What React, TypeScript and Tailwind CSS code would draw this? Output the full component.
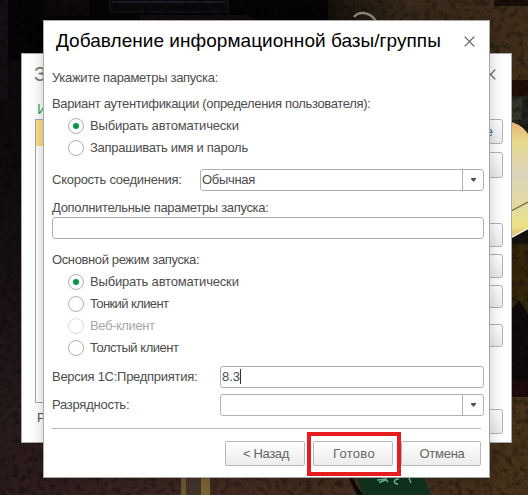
import clsx from "clsx";
import type { ReactNode } from "react";

interface Option {
  label: string;
  spacing: string;
  checked?: boolean;
  disabled?: boolean;
}

const AUTH_OPTIONS: Option[] = [
  { label: "Выбирать автоматически", spacing: "tracking-[-0.18px]", checked: true },
  { label: "Запрашивать имя и пароль", spacing: "tracking-[-0.29px]" },
];

const MODE_OPTIONS: Option[] = [
  { label: "Выбирать автоматически", spacing: "tracking-[-0.18px]", checked: true },
  { label: "Тонкий клиент", spacing: "tracking-[-0.6px]" },
  { label: "Веб-клиент", spacing: "tracking-[-0.4px]", disabled: true },
  { label: "Толстый клиент", spacing: "tracking-[-0.48px]" },
];

function Wallpaper() {
  return (
    <svg className="absolute inset-0" width="528" height="495" viewBox="0 0 528 495">
      <defs>
        <linearGradient id="left" x1="0" y1="0" x2="0" y2="1">
          <stop offset="0" stopColor="#0b070a" />
          <stop offset="0.35" stopColor="#100b0e" />
          <stop offset="0.7" stopColor="#1e1517" />
          <stop offset="1" stopColor="#32221f" />
        </linearGradient>
        <linearGradient id="wood" x1="0" y1="0" x2="1" y2="0">
          <stop offset="0" stopColor="#18110a" />
          <stop offset="0.4" stopColor="#382a1c" />
          <stop offset="1" stopColor="#402e1a" />
        </linearGradient>
        <linearGradient id="floor" x1="0" y1="0" x2="1" y2="0">
          <stop offset="0" stopColor="#2a1b1b" />
          <stop offset="0.4" stopColor="#402b22" />
          <stop offset="1" stopColor="#46311a" />
        </linearGradient>
        <linearGradient id="lamp" x1="0" y1="0" x2="0" y2="1">
          <stop offset="0" stopColor="#e8b070" />
          <stop offset="0.17" stopColor="#e6d98a" />
          <stop offset="0.45" stopColor="#dcd3bc" />
          <stop offset="0.75" stopColor="#e2dc9c" />
          <stop offset="0.9" stopColor="#ece284" />
          <stop offset="1" stopColor="#e0b070" />
        </linearGradient>
        <filter id="grain" x="0" y="0" width="100%" height="100%">
          <feTurbulence type="fractalNoise" baseFrequency="0.16" numOctaves="3" seed="4" />
          <feColorMatrix values="0 0 0 0 0  0 0 0 0 0  0 0 0 0 0  3 0 0 0 -1.35" />
        </filter>
      </defs>
      <rect width="528" height="495" fill="url(#left)" />
      <rect x="8" width="320" height="60" fill="#060406" />
      <rect width="8" height="100" fill="#150d14" />
      <rect x="44" width="46" height="16" fill="#0d090b" />
      <path d="M110 0v12h118V0" fill="#0b090d" stroke="#211a1a" />
      <path d="M112 2h114" stroke="#1c1c24" strokeWidth="2" />
      <path d="M140 15h108l8 5H140z" fill="#120e0e" />
      <rect x="328" width="200" height="82" fill="url(#wood)" />
      <rect x="494" width="34" height="6" fill="#1c0e0a" />
      <rect x="511" y="80" width="17" height="16" fill="#1f0f08" />
      <rect x="511" y="96" width="17" height="40" fill="#22201a" />
      <rect x="512" y="98" width="10" height="22" fill="#35342a" />
      <rect x="511" y="235" width="17" height="155" fill="#33260a" />
      <path d="M511 310l8-10 9 14v76h-17z" fill="#0e0a09" />
      <rect x="511" y="380" width="17" height="17" fill="#1c0b0a" />
      <rect x="511" y="397" width="17" height="98" fill="#46311a" />
      <rect x="0" y="443" width="528" height="52" fill="url(#floor)" />
      <rect width="528" height="495" filter="url(#grain)" opacity="0.35" />
      <path d="M354 17c4-6 15-6 22 4" fill="none" stroke="#8d8b76" strokeWidth="2.5" />
      <path d="M511 228l17-6v22h-17z" fill="#17110b" />
      <path d="M511 122c8 2 13 6 17 12v95l-17 9z" fill="url(#lamp)" />
      <path d="M511 211l17-9" stroke="#6b6a3f" strokeWidth="1.2" />
      <path d="M511 237.500l17-9" stroke="#f3eedb" strokeWidth="1.5" />
      <rect x="181" y="478" width="5" height="17" fill="#6b5730" />
      <rect x="186" y="478" width="15" height="17" fill="#40332a" />
      <rect x="201" y="478" width="9" height="17" fill="#7a6231" />
      <path d="M354 470h67l10 25h-68z" fill="#10321d" />
      <path d="M352 478l11 17h-6l-8-17z" fill="#0c0907" />
      <path d="M377 480l9-1M379 482.500l8-3M388 482l-3-4M399 479c-6 0-6 5-1 5M409 478l2 5" fill="none" stroke="#6bb99a" strokeWidth="1.5" />
    </svg>
  );
}

function CloseIcon() {
  return (
    <svg className="shrink-0" width="11" height="11" viewBox="0 0 11 11" stroke="#5a5a5a" strokeWidth="1.2">
      <path d="M0.7 0.7l9.6 9.6M10.3 0.7L0.7 10.3" />
    </svg>
  );
}

function Radio({ label, spacing, checked, disabled }: Option) {
  return (
    <label className={clsx("flex h-[22px] items-center gap-1.5 pl-4", disabled ? "text-[#a9a9a9]" : "text-[#4d4d4d]", spacing)}>
      <span
        className={clsx(
          "flex size-4 shrink-0 items-center justify-center rounded-full border",
          disabled ? "border-[#dcdcdc]" : "border-[#b0b0b0]"
        )}
      >
        {checked && <span className="size-[6px] rounded-full bg-[#009646]" />}
      </span>
      {label}
    </label>
  );
}

function Field({ value, dropdown, caret, className }: { value?: string; dropdown?: boolean; caret?: boolean; className?: string }) {
  return (
    <div className={clsx("flex h-[22px] rounded-[3px] border border-[#b0b0b0] bg-white", className)}>
      <div className="flex flex-1 items-center pb-px pl-px">
        {value}
        {caret && <span className="h-[15px] w-px bg-[#333]" />}
      </div>
      {dropdown && (
        <div className="flex w-[21px] items-center justify-center border-l border-[#b0b0b0]">
          <svg width="5" height="4" viewBox="0 0 5 4">
            <path d="M0 0h5v1L2.5 4 0 1z" fill="#505050" />
          </svg>
        </div>
      )}
    </div>
  );
}

function Button({ className, children }: { className?: string; children: ReactNode }) {
  return (
    <button
      className={clsx(
        "h-[25px] w-20 rounded-[2px] border border-[#b8b8b8] bg-linear-to-b from-white to-[#ececec] text-[#666]",
        className
      )}
    >
      {children}
    </button>
  );
}

function SideButton({ className, children }: { className: string; children?: ReactNode }) {
  return (
    <div className={clsx("w-20 rounded-[3px] border border-[#b3b3b3] bg-linear-to-b from-white to-[#ececec]", className)}>
      {children}
    </div>
  );
}

function LauncherWindow() {
  return (
    <div className="absolute top-[53px] left-[21px] flex h-[390px] w-[491px] flex-col border border-[#a9a9a9] bg-white text-[#555]">
      <div className="flex h-10 items-center justify-between pr-[15px] pl-3 text-xl text-[#777]">
        <span>З</span>
        <CloseIcon />
      </div>
      <div className="flex flex-1 justify-between pr-2 pl-[13px]">
        <div className="w-[350px]">
          <div className="flex h-[25px] items-center pl-0.5 pt-1 text-[15px] text-[#2fae66]">И</div>
          <div className="h-[284px] border border-[#a9a9a9]">
            <div className="h-[26px] bg-[#fbe08a]" />
          </div>
          <div className="flex h-[26px] items-center pl-0.5 pt-1">Р</div>
        </div>
        <div className="flex flex-col pt-[25px]">
          <SideButton className="flex h-[25px] items-center justify-end pr-[9px] text-[#4a5a80]">е</SideButton>
          <SideButton className="mt-2 h-[26px]" />
          <SideButton className="mt-[45px] h-6" />
          <SideButton className="mt-[7px] h-6" />
          <SideButton className="mt-[7px] h-[23px]" />
          <SideButton className="mt-4 h-[23px]" />
          <SideButton className="mt-[62px] h-[25px]" />
        </div>
      </div>
    </div>
  );
}

export default function App() {
  return (
    <div className="relative h-[495px] w-[528px] overflow-hidden bg-[#0b070a] font-['Liberation_Sans',Arial,sans-serif] text-[13px] leading-4 whitespace-nowrap">
      <Wallpaper />
      <LauncherWindow />

      <div className="absolute top-5 left-[43px] flex h-[458px] w-[447px] flex-col border border-[#a9a9a9] bg-white text-[#4d4d4d] shadow-[0_0_14px_rgba(0,0,0,0.22)]">
        <div className="flex h-10 items-center justify-between pr-[14px] pl-3">
          <h1 className="text-[19px] tracking-[0.04px] text-black">Добавление информационной базы/группы</h1>
          <CloseIcon />
        </div>

        <div className="flex flex-1 flex-col pr-[5px] pl-2">
          <p className="mt-[9px] h-4 tracking-[-0.31px]">Укажите параметры запуска:</p>

          <p className="mt-2.5 h-4 tracking-[-0.34px]">Вариант аутентификации (определения пользователя):</p>
          <div className="mt-[3px]">
            {AUTH_OPTIONS.map(o => <Radio key={o.label} {...o} />)}
          </div>

          <div className="mt-2.5 flex items-center">
            <span className="w-[148px] tracking-[-0.26px]">Скорость соединения:</span>
            <Field className="flex-1 tracking-[-0.3px]" value="Обычная" dropdown />
          </div>

          <p className="mt-[9px] h-4 tracking-[-0.32px]">Дополнительные параметры запуска:</p>
          <Field className="mt-px" />

          <p className="mt-[13px] h-4 tracking-[-0.38px]">Основной режим запуска:</p>
          <div className="mt-[3px]">
            {MODE_OPTIONS.map(o => <Radio key={o.label} {...o} />)}
          </div>

          <div className="mt-[7px] flex items-center">
            <span className="w-[168px] tracking-[-0.27px]">Версия 1С:Предприятия:</span>
            <Field className="flex-1" value="8.3" caret />
          </div>
          <div className="mt-1.5 flex items-center">
            <span className="w-[168px] tracking-[-0.25px]">Разрядность:</span>
            <Field className="flex-1" dropdown />
          </div>

          <div className="mt-3 mr-[3px] h-px bg-[#b8b8b8]" />
          <div className="mt-3 mr-[3px] flex justify-end gap-2">
            <Button className="pl-0.5 tracking-[-0.35px]">&lt; Назад</Button>
            <div className="relative">
              <Button className="pl-0.5 tracking-[0.3px]">Готово</Button>
              <div className="absolute -top-[9px] -left-1.5 h-11 w-[94px] border-4 border-[#e81c1c]" />
            </div>
            <Button className="pl-0.5 tracking-[-0.25px]">Отмена</Button>
          </div>
        </div>
      </div>
    </div>
  );
}
